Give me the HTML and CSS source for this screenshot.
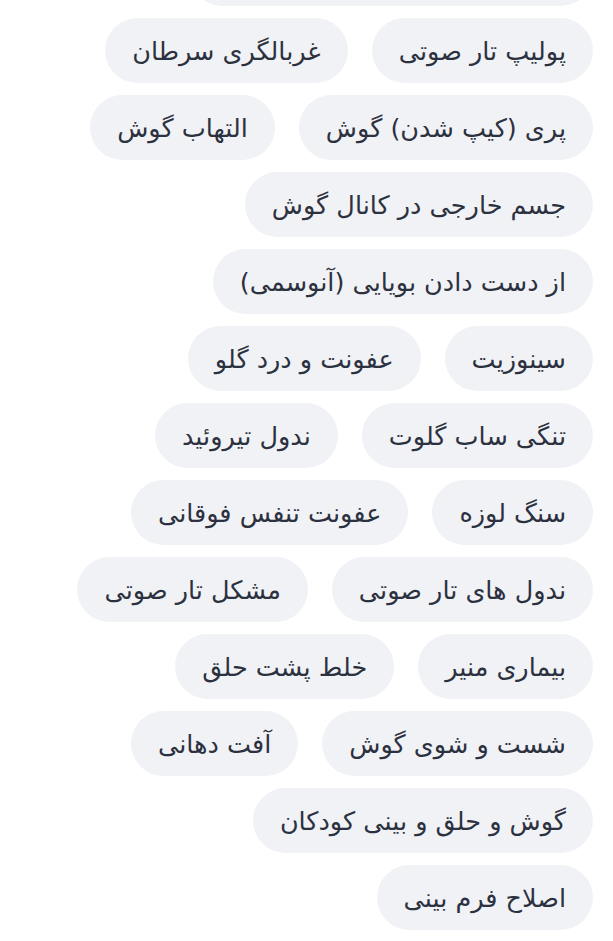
FILE: index.html
```html
<!DOCTYPE html>
<html lang="fa" dir="rtl">
<head>
<meta charset="utf-8">
<link rel="stylesheet" href="styles.css">
</head>
<body>
<div class="tags">
  <span class="tag">جراحی آندوسکوپیک سینوس بینی</span>
  <span class="tag">پولیپ تار صوتی</span>
  <span class="tag">غربالگری سرطان</span>
  <span class="tag">پری (کیپ شدن) گوش</span>
  <span class="tag">التهاب گوش</span>
  <span class="tag">جسم خارجی در کانال گوش</span>
  <span class="tag">از دست دادن بویایی (آنوسمی)</span>
  <span class="tag">سینوزیت</span>
  <span class="tag">عفونت و درد گلو</span>
  <span class="tag">تنگی ساب گلوت</span>
  <span class="tag">ندول تیروئید</span>
  <span class="tag">سنگ لوزه</span>
  <span class="tag">عفونت تنفس فوقانی</span>
  <span class="tag">ندول های تار صوتی</span>
  <span class="tag">مشکل تار صوتی</span>
  <span class="tag">بیماری منیر</span>
  <span class="tag">خلط پشت حلق</span>
  <span class="tag">شست و شوی گوش</span>
  <span class="tag">آفت دهانی</span>
  <span class="tag">گوش و حلق و بینی کودکان</span>
  <span class="tag">اصلاح فرم بینی</span>
</div>
</body>
</html>
```
FILE: styles.css
```css
html, body {
  margin: 0;
  padding: 0;
  background: #ffffff;
}
body {
  font-family: "DejaVu Sans", sans-serif;
  direction: rtl;
}
.tags {
  display: flex;
  flex-wrap: wrap;
  gap: 12px 24px;
  padding: 0 20px 0 48px;
  margin-top: -59px;
}
.tag {
  display: inline-flex;
  align-items: center;
  height: 65px;
  padding: 0 27px;
  border-radius: 33px;
  background: #f1f2f6;
  color: #2c3140;
  font-size: 25.5px;
  white-space: nowrap;
}
```
